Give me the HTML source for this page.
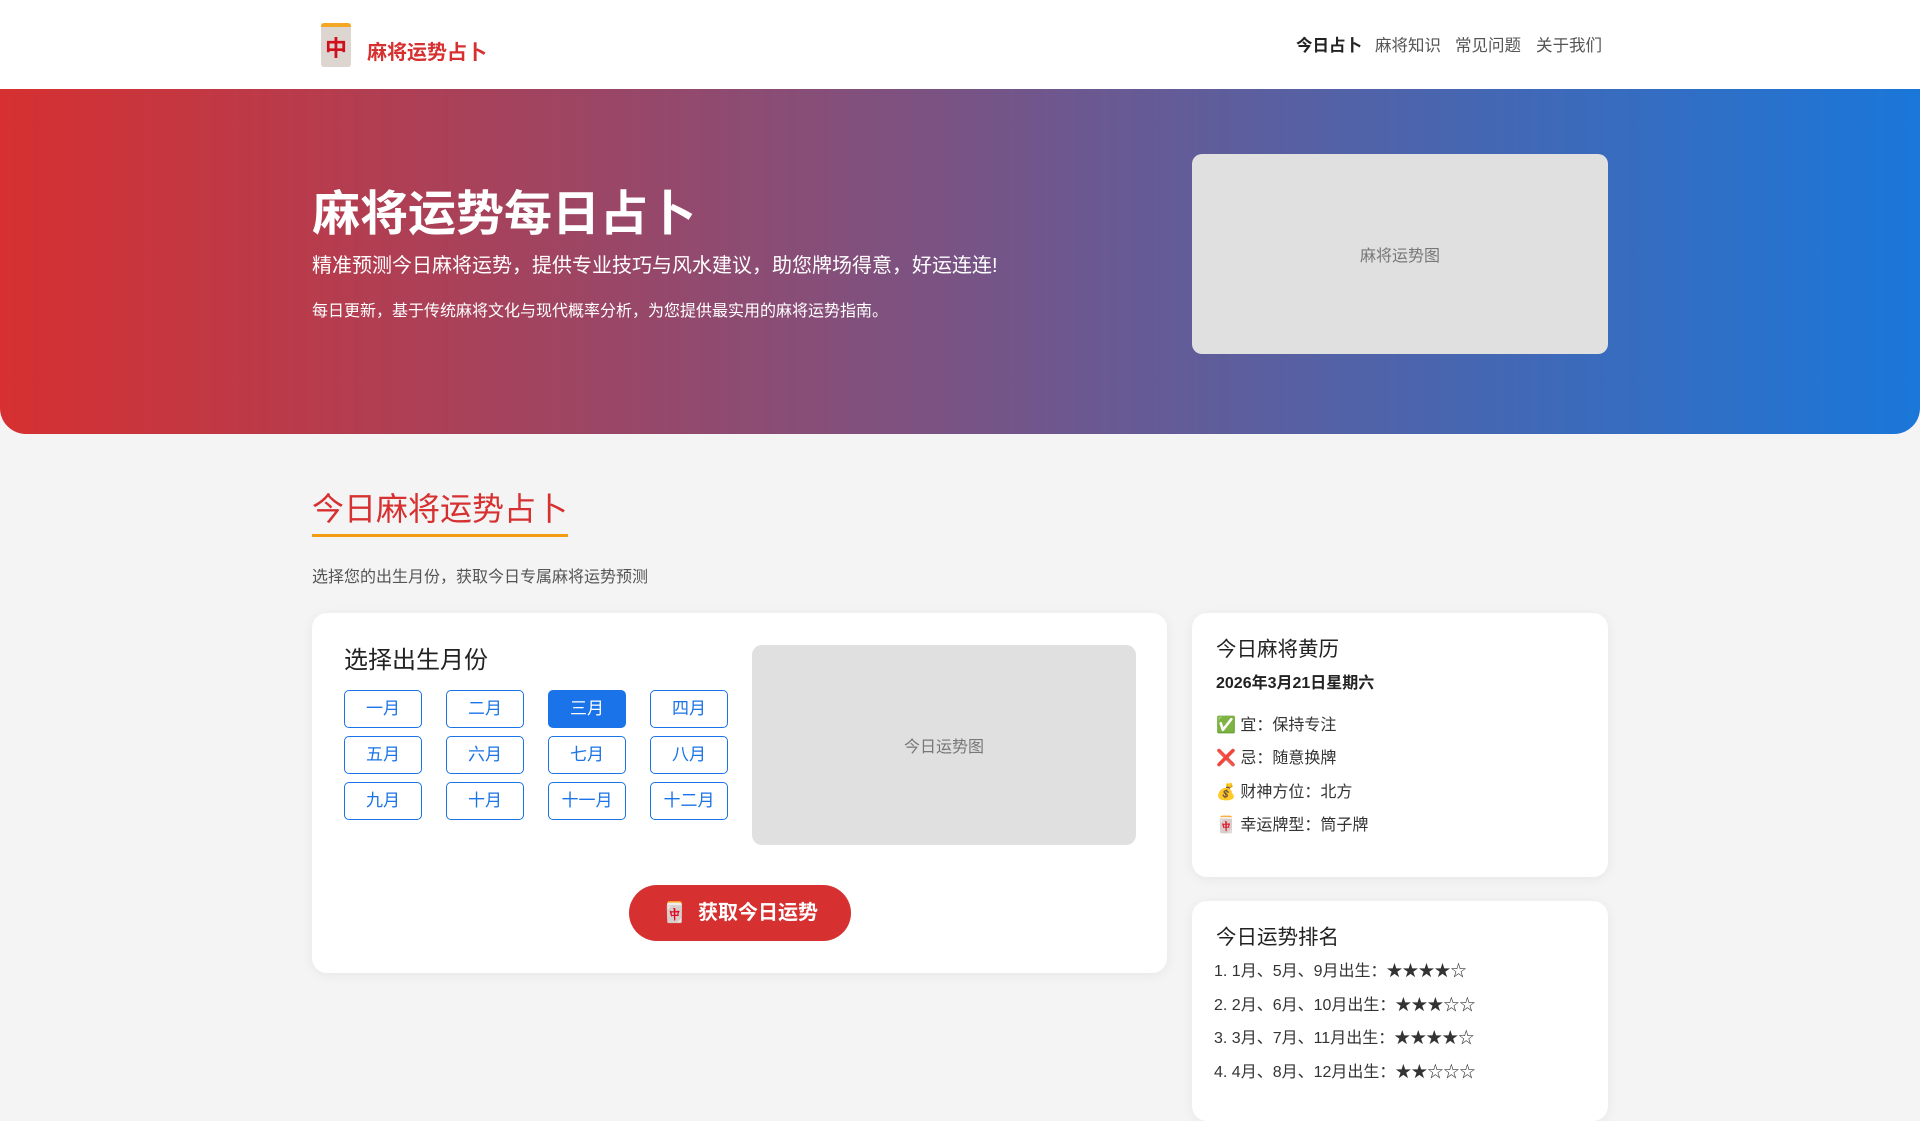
<!DOCTYPE html>
<html><head><meta charset="utf-8"><style>
*{box-sizing:border-box;margin:0;padding:0}
body{width:1920px;height:1080px;overflow:hidden;background:#f4f4f4;font-family:"Liberation Sans","Noto Sans CJK SC",sans-serif;color:#333;position:relative}
.abs{position:absolute}
header{position:absolute;left:0;top:0;width:1920px;height:89px;background:#fff}
.hero{position:absolute;left:0;top:89px;width:1920px;height:345px;background:linear-gradient(90deg,#d63031,#1a77d9);border-radius:0 0 26px 26px}
.card{position:absolute;background:#fff;border-radius:15px;box-shadow:0 2px 12px rgba(0,0,0,.06)}
.mb{position:absolute;width:78px;height:38px;border:1px solid #1a73e8;border-radius:5px;color:#1a73e8;font-size:17px;text-align:center;line-height:36px;background:#fff}
.mb.on{background:#1a73e8;color:#fff}
.ph{position:absolute;background:#e0e0e0;border-radius:10px;color:#777;font-size:16px;display:flex;align-items:center;justify-content:center}
.li{position:absolute;font-size:16px;white-space:nowrap}
</style></head><body>
<header>
<div class="abs" style="left:321px;top:23px;width:30px;height:44px;background:#ddd5d0;border-radius:3px;border-top:4px solid #f5a623;color:#d0101b;font-weight:bold;font-size:22px;text-align:center;line-height:44px">中</div>
<div class="abs" style="left:367px;top:36px;font-size:20px;font-weight:bold;color:#d63031">麻将运势占卜</div>
<div class="abs" style="left:1296px;top:32px;font-size:16.5px;color:#222;font-weight:bold">今日占卜</div>
<div class="abs" style="left:1375px;top:32px;font-size:16.5px;color:#555">麻将知识</div>
<div class="abs" style="left:1455px;top:32px;font-size:16.5px;color:#555">常见问题</div>
<div class="abs" style="left:1536px;top:32px;font-size:16.5px;color:#555">关于我们</div>
</header>
<div class="hero"></div>
<div class="abs" style="left:312px;top:174px;font-size:48px;font-weight:bold;color:#fff">麻将运势每日占卜</div>
<div class="abs" style="left:312px;top:249px;font-size:20px;color:#fff">精准预测今日麻将运势，提供专业技巧与风水建议，助您牌场得意，好运连连!</div>
<div class="abs" style="left:312px;top:297px;font-size:16px;color:#fff">每日更新，基于传统麻将文化与现代概率分析，为您提供最实用的麻将运势指南。</div>
<div class="ph" style="left:1192px;top:154px;width:416px;height:200px">麻将运势图</div>
<div class="abs" style="left:312px;top:484px;font-size:32px;color:#d63031">今日麻将运势占卜</div>
<div class="abs" style="left:312px;top:534px;width:256px;height:3px;background:#f39c12"></div>
<div class="abs" style="left:312px;top:563px;font-size:16px;color:#555">选择您的出生月份，获取今日专属麻将运势预测</div>
<div class="card" style="left:312px;top:613px;width:855px;height:360px"></div>
<div class="abs" style="left:344px;top:640px;font-size:24px;color:#222">选择出生月份</div>
<div class="mb" style="left:344px;top:690px">一月</div><div class="mb" style="left:446px;top:690px">二月</div><div class="mb on" style="left:548px;top:690px">三月</div><div class="mb" style="left:650px;top:690px">四月</div>
<div class="mb" style="left:344px;top:736px">五月</div><div class="mb" style="left:446px;top:736px">六月</div><div class="mb" style="left:548px;top:736px">七月</div><div class="mb" style="left:650px;top:736px">八月</div>
<div class="mb" style="left:344px;top:782px">九月</div><div class="mb" style="left:446px;top:782px">十月</div><div class="mb" style="left:548px;top:782px">十一月</div><div class="mb" style="left:650px;top:782px">十二月</div>
<div class="ph" style="left:752px;top:645px;width:384px;height:200px">今日运势图</div>
<div class="abs" style="left:629px;top:885px;width:222px;height:56px;background:#d63031;border-radius:28px;color:#fff;font-size:20px;font-weight:bold;text-align:center;line-height:56px">🀄&nbsp; 获取今日运势</div>
<div class="card" style="left:1192px;top:613px;width:416px;height:264px"></div>
<div class="abs" style="left:1216px;top:632px;font-size:20.5px;color:#222">今日麻将黄历</div>
<div class="abs" style="left:1216px;top:669px;font-size:16px;font-weight:bold;color:#222">2026年3月21日星期六</div>
<div class="li" style="left:1216px;top:711px">✅ 宜：保持专注</div>
<div class="li" style="left:1216px;top:744px">❌ 忌：随意换牌</div>
<div class="li" style="left:1216px;top:778px">💰 财神方位：北方</div>
<div class="li" style="left:1216px;top:811px">🀄 幸运牌型：筒子牌</div>
<div class="card" style="left:1192px;top:901px;width:416px;height:220px"></div>
<div class="abs" style="left:1216px;top:920px;font-size:20.5px;color:#222">今日运势排名</div>
<div class="li" style="left:1214px;top:957px">1. 1月、5月、9月出生：★★★★☆</div>
<div class="li" style="left:1214px;top:991px">2. 2月、6月、10月出生：★★★☆☆</div>
<div class="li" style="left:1214px;top:1024px">3. 3月、7月、11月出生：★★★★☆</div>
<div class="li" style="left:1214px;top:1058px">4. 4月、8月、12月出生：★★☆☆☆</div>
</body></html>
